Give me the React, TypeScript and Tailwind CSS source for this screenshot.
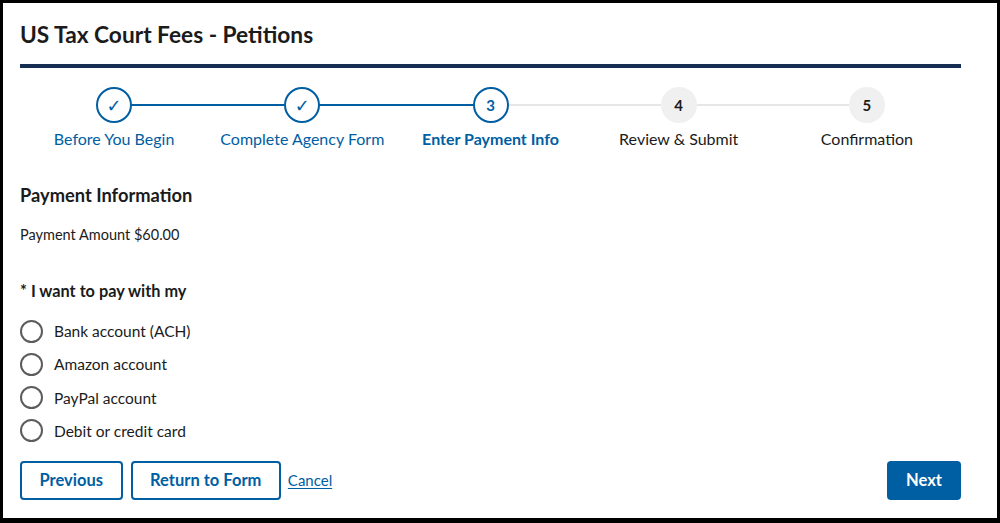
import React from "react";

type StepState = "done" | "current" | "todo";

const steps: { label: string; state: StepState }[] = [
  { label: "Before You Begin", state: "done" },
  { label: "Complete Agency Form", state: "done" },
  { label: "Enter Payment Info", state: "current" },
  { label: "Review & Submit", state: "todo" },
  { label: "Confirmation", state: "todo" },
];

const methods = [
  "Bank account (ACH)",
  "Amazon account",
  "PayPal account",
  "Debit or credit card",
];

const StepIndicator = () => (
  <div className="flex mt-[19px]">
    {steps.map((step, i) => {
      const reached = step.state !== "todo";
      const nextReached = i < steps.length - 1 && steps[i + 1].state !== "todo";
      return (
        <div key={step.label} className="flex-1 flex flex-col items-center relative">
          {i > 0 && (
            <div
              className={
                "absolute left-0 right-1/2 top-[17px] h-[2px] " +
                (reached ? "bg-[#005ea2]" : "bg-[#e6e6e6]")
              }
            />
          )}
          {i < steps.length - 1 && (
            <div
              className={
                "absolute left-1/2 right-0 top-[17px] h-[2px] " +
                (nextReached ? "bg-[#005ea2]" : "bg-[#e6e6e6]")
              }
            />
          )}
          {step.state === "done" && (
            <div className="relative z-10 w-[36px] h-[36px] rounded-full border-2 border-[#005ea2] bg-white flex items-center justify-center text-[#005ea2] text-[18px] font-['DejaVu_Sans',sans-serif]">
              ✓
            </div>
          )}
          {step.state === "current" && (
            <div className="relative z-10 w-[36px] h-[36px] rounded-full border-2 border-[#005ea2] bg-white flex items-center justify-center text-[#005ea2] text-[15px] font-bold">
              {i + 1}
            </div>
          )}
          {step.state === "todo" && (
            <div className="relative z-10 w-[36px] h-[36px] rounded-full bg-[#f0f0f0] flex items-center justify-center text-[#1b1b1b] text-[15px] font-bold">
              {i + 1}
            </div>
          )}
          <div
            className={
              "mt-[4px] text-[16px] leading-[24px] " +
              (step.state === "done"
                ? "text-[#005ea2]"
                : step.state === "current"
                ? "text-[#005ea2] font-bold"
                : "text-[#1b1b1b]")
            }
          >
            {step.label}
          </div>
        </div>
      );
    })}
  </div>
);

export default function App() {
  return (
    <div className="w-[1000px] h-[523px] bg-white border-black border-x-[3px] border-t-[3px] border-b-[5px] pl-[17px] pr-[36px] pt-[18px] font-['Lato',sans-serif] text-[#1b1b1b] overflow-hidden">
      <h1 className="text-[22.7px] leading-[28px] font-bold">US Tax Court Fees - Petitions</h1>
      <div className="mt-[15px] h-[4px] bg-[#162e51]" />

      <StepIndicator />

      <h2 className="mt-[32px] text-[18.3px] leading-[24px] font-bold">Payment Information</h2>
      <p className="mt-[18px] text-[14.5px] leading-[20px]">Payment Amount $60.00</p>

      <fieldset className="mt-[34px]">
        <legend className="text-[16.3px] leading-[24px] font-bold">* I want to pay with my</legend>
        <div className="mt-[17px] flex flex-col gap-[11.3px]">
          {methods.map((m) => (
            <label key={m} className="flex items-center h-[22px]">
              <span className="w-[23px] h-[23px] rounded-full border-2 border-[#5c5c5c] bg-white shrink-0" />
              <span className="ml-[11px] text-[15.5px] leading-[22px]">{m}</span>
            </label>
          ))}
        </div>
      </fieldset>

      <div className="mt-[19px] flex items-center">
        <button className="h-[39px] px-[17.5px] rounded-[4px] border-2 border-[#005ea2] text-[#005ea2] text-[16.5px] font-bold">
          Previous
        </button>
        <button className="ml-[8px] h-[39px] px-[17.5px] rounded-[4px] border-2 border-[#005ea2] text-[#005ea2] text-[16.5px] font-bold">
          Return to Form
        </button>
        <a href="#" className="ml-[7px] text-[15px] text-[#005ea2] underline underline-offset-2">
          Cancel
        </a>
        <button className="ml-auto h-[39px] px-[19px] rounded-[4px] bg-[#005ea2] text-white text-[16.5px] font-bold">
          Next
        </button>
      </div>
    </div>
  );
}
